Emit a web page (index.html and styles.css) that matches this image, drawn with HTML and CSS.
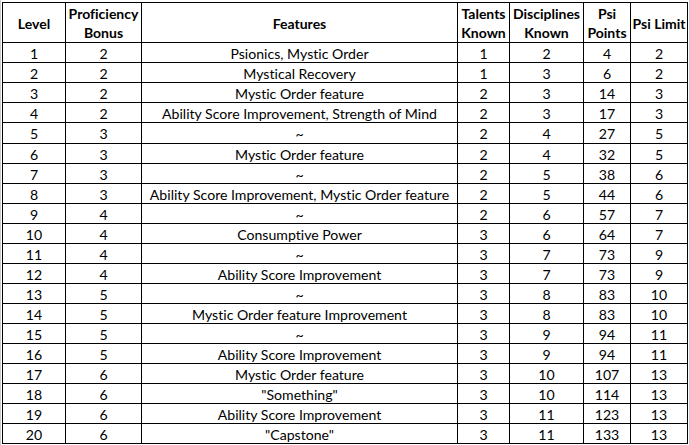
FILE: index.html
```html
<!DOCTYPE html>
<html lang="en">
<head>
<meta charset="utf-8">
<title>Mystic Progression</title>
<link rel="stylesheet" href="styles.css">
</head>
<body>
<div class="frame">
<div class="sheet">
<div class="c hd">Level</div><div class="c hd">Proficiency<br>Bonus</div><div class="c hd">Features</div><div class="c hd">Talents<br>Known</div><div class="c hd">Disciplines<br>Known</div><div class="c hd">Psi<br>Points</div><div class="c hd">Psi Limit</div>
<div class="c">1</div><div class="c">2</div><div class="c">Psionics, Mystic Order</div><div class="c">1</div><div class="c">2</div><div class="c">4</div><div class="c">2</div>
<div class="c">2</div><div class="c">2</div><div class="c">Mystical Recovery</div><div class="c">1</div><div class="c">3</div><div class="c">6</div><div class="c">2</div>
<div class="c">3</div><div class="c">2</div><div class="c">Mystic Order feature</div><div class="c">2</div><div class="c">3</div><div class="c">14</div><div class="c">3</div>
<div class="c">4</div><div class="c">2</div><div class="c">Ability Score Improvement, Strength of Mind</div><div class="c">2</div><div class="c">3</div><div class="c">17</div><div class="c">3</div>
<div class="c">5</div><div class="c">3</div><div class="c">~</div><div class="c">2</div><div class="c">4</div><div class="c">27</div><div class="c">5</div>
<div class="c">6</div><div class="c">3</div><div class="c">Mystic Order feature</div><div class="c">2</div><div class="c">4</div><div class="c">32</div><div class="c">5</div>
<div class="c">7</div><div class="c">3</div><div class="c">~</div><div class="c">2</div><div class="c">5</div><div class="c">38</div><div class="c">6</div>
<div class="c">8</div><div class="c">3</div><div class="c">Ability Score Improvement, Mystic Order feature</div><div class="c">2</div><div class="c">5</div><div class="c">44</div><div class="c">6</div>
<div class="c">9</div><div class="c">4</div><div class="c">~</div><div class="c">2</div><div class="c">6</div><div class="c">57</div><div class="c">7</div>
<div class="c">10</div><div class="c">4</div><div class="c">Consumptive Power</div><div class="c">3</div><div class="c">6</div><div class="c">64</div><div class="c">7</div>
<div class="c">11</div><div class="c">4</div><div class="c">~</div><div class="c">3</div><div class="c">7</div><div class="c">73</div><div class="c">9</div>
<div class="c">12</div><div class="c">4</div><div class="c">Ability Score Improvement</div><div class="c">3</div><div class="c">7</div><div class="c">73</div><div class="c">9</div>
<div class="c">13</div><div class="c">5</div><div class="c">~</div><div class="c">3</div><div class="c">8</div><div class="c">83</div><div class="c">10</div>
<div class="c">14</div><div class="c">5</div><div class="c">Mystic Order feature Improvement</div><div class="c">3</div><div class="c">8</div><div class="c">83</div><div class="c">10</div>
<div class="c">15</div><div class="c">5</div><div class="c">~</div><div class="c">3</div><div class="c">9</div><div class="c">94</div><div class="c">11</div>
<div class="c">16</div><div class="c">5</div><div class="c">Ability Score Improvement</div><div class="c">3</div><div class="c">9</div><div class="c">94</div><div class="c">11</div>
<div class="c">17</div><div class="c">6</div><div class="c">Mystic Order feature</div><div class="c">3</div><div class="c">10</div><div class="c">107</div><div class="c">13</div>
<div class="c">18</div><div class="c">6</div><div class="c">"Something"</div><div class="c">3</div><div class="c">10</div><div class="c">114</div><div class="c">13</div>
<div class="c">19</div><div class="c">6</div><div class="c">Ability Score Improvement</div><div class="c">3</div><div class="c">11</div><div class="c">123</div><div class="c">13</div>
<div class="c">20</div><div class="c">6</div><div class="c">"Capstone"</div><div class="c">3</div><div class="c">11</div><div class="c">133</div><div class="c">13</div>
</div>
</div>
</body>
</html>
```
FILE: styles.css
```css
html, body {
  margin: 0;
  padding: 0;
  background: #ffffff;
}
body {
  width: 690px;
  height: 445px;
  overflow: hidden;
}
.frame {
  box-sizing: border-box;
  width: 690px;
  height: 445px;
  border-left: 1px solid #c8cbcf;
  border-right: 1px solid #c8cbcf;
  padding: 2px 0 0 1px;
}
.sheet {
  display: grid;
  width: 686px;
  box-sizing: border-box;
  grid-template-columns: 62px 75px 315px 51px 73px 46px 56px;
  grid-template-rows: 39px 19px 19px 19px 19px 20px repeat(15, 19px);
  gap: 1px;
  padding: 1px;
  background: #000000;
  font-family: Lato, "Liberation Sans", sans-serif;
  font-size: 14.1px;
  font-variant-ligatures: none;
  color: #000000;
}
.c {
  background: #ffffff;
  display: flex;
  align-items: center;
  justify-content: center;
  text-align: center;
  line-height: 19px;
  white-space: nowrap;
  padding-top: 1px;
}
.hd {
  font-weight: 700;
  font-size: 14px;
}
```
